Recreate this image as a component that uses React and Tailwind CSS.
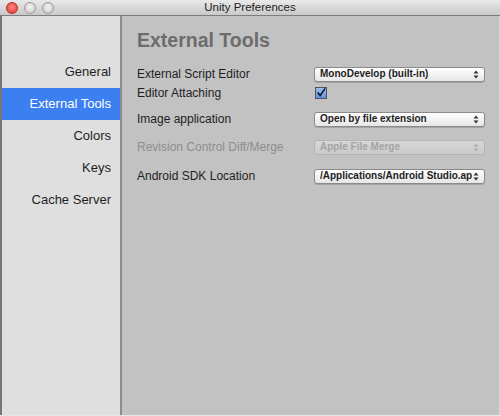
import React from "react";

const font = { fontFamily: '"Liberation Sans", Arial, sans-serif' };

function Arrows({ dim }) {
  const c = dim ? "#b0b0b0" : "#333";
  return (
    <svg width="6" height="9" viewBox="0 0 6 9" className="shrink-0">
      <path d="M3 0.5 L5.5 3.5 L0.5 3.5 Z" fill={c} />
      <path d="M3 8.5 L5.5 5.5 L0.5 5.5 Z" fill={c} />
    </svg>
  );
}

function Popup({ text, dim }) {
  return (
    <div
      className={`flex h-[15px] w-[171px] items-center justify-between gap-[1px] rounded-[3px] border pl-[5px] pr-[5px] ${
        dim
          ? "border-[#b5b5b5] bg-gradient-to-b from-[#d6d6d6] to-[#cacaca] text-[#a4a4a4]"
          : "border-[#8a8a8a] bg-gradient-to-b from-[#ffffff] to-[#e6e6e6] text-[#1e1e1e] shadow-[0_1px_0_rgba(0,0,0,0.15)]"
      }`}
    >
      <span className="overflow-hidden whitespace-nowrap text-[10px] font-bold leading-none">
        {text}
      </span>
      <Arrows dim={dim} />
    </div>
  );
}

function Light({ color }) {
  return <div className={`h-[12px] w-[12px] rounded-full border ${color}`} />;
}

export default function App() {
  const items = ["General", "External Tools", "Colors", "Keys", "Cache Server"];
  return (
    <div className="flex h-[416px] w-[500px] flex-col bg-[#c2c2c2]" style={font}>
      {/* title bar */}
      <div className="relative flex h-[16px] shrink-0 items-center border-b border-[#7d7d7d] bg-gradient-to-b from-[#e9e9e9] to-[#c9c9c9]">
        <div className="flex gap-[6px] pl-[6px]">
          <Light color="border-[#b03030] bg-[radial-gradient(circle_at_50%_40%,#ff8a80,#e0302a)]" />
          <Light color="border-[#9a9a9a] bg-[radial-gradient(circle_at_50%_40%,#f4f4f4,#c4c4c4)]" />
          <Light color="border-[#9a9a9a] bg-[radial-gradient(circle_at_50%_40%,#f4f4f4,#c4c4c4)]" />
        </div>
        <div className="absolute inset-0 flex items-center justify-center text-[11.5px] text-[#222]">
          Unity Preferences
        </div>
      </div>
      <div className="flex flex-1 border-b border-[#e6e6e6]">
        {/* sidebar */}
        <div className="flex w-[122px] shrink-0 flex-col border-l-2 border-r-2 border-l-[#777] border-r-[#8c8c8c] bg-[#dfdfdf] pt-[40px]">
          {items.map((it) => (
            <div
              key={it}
              className={`flex h-[32px] items-center justify-end pr-[9px] text-[13px] ${
                it === "External Tools" ? "bg-[#3b7ff0] text-white" : "text-[#1e1e1e]"
              }`}
            >
              {it}
            </div>
          ))}
        </div>
        {/* content */}
        <div className="flex flex-1 flex-col border-r border-[#d8d8d8] pl-[15px] pt-[15px]">
          <div className="text-[19.5px] font-bold leading-none text-[#6c6c6c]">External Tools</div>
          <div className="mt-[16px] flex flex-col pr-[14px] text-[12px] text-[#1e1e1e]">
            <div className="flex h-[15px] items-center justify-between">
              <span>External Script Editor</span>
              <Popup text="MonoDevelop (built-in)" />
            </div>
            <div className="mt-[5px] flex h-[13px] items-center justify-between">
              <span>Editor Attaching</span>
              <div className="flex w-[171px]">
                <div className="ml-[1px] flex h-[12px] w-[12px] items-center justify-center border border-[#555] bg-gradient-to-b from-[#9dbcf0] to-[#5f8ee0]">
                  <svg width="12" height="12" viewBox="0 0 12 12">
                    <path d="M2 5.5 L5 9 L11 0.5" stroke="#111" strokeWidth="1.8" fill="none" />
                  </svg>
                </div>
              </div>
            </div>
            <div className="mt-[12px] flex h-[15px] items-center justify-between">
              <span>Image application</span>
              <Popup text="Open by file extension" />
            </div>
            <div className="mt-[13px] flex h-[15px] items-center justify-between text-[#8d8d8d]">
              <span>Revision Control Diff/Merge</span>
              <Popup text="Apple File Merge" dim />
            </div>
            <div className="mt-[14px] flex h-[15px] items-center justify-between">
              <span>Android SDK Location</span>
              <Popup text="/Applications/Android Studio.app" />
            </div>
          </div>
        </div>
      </div>
    </div>
  );
}
